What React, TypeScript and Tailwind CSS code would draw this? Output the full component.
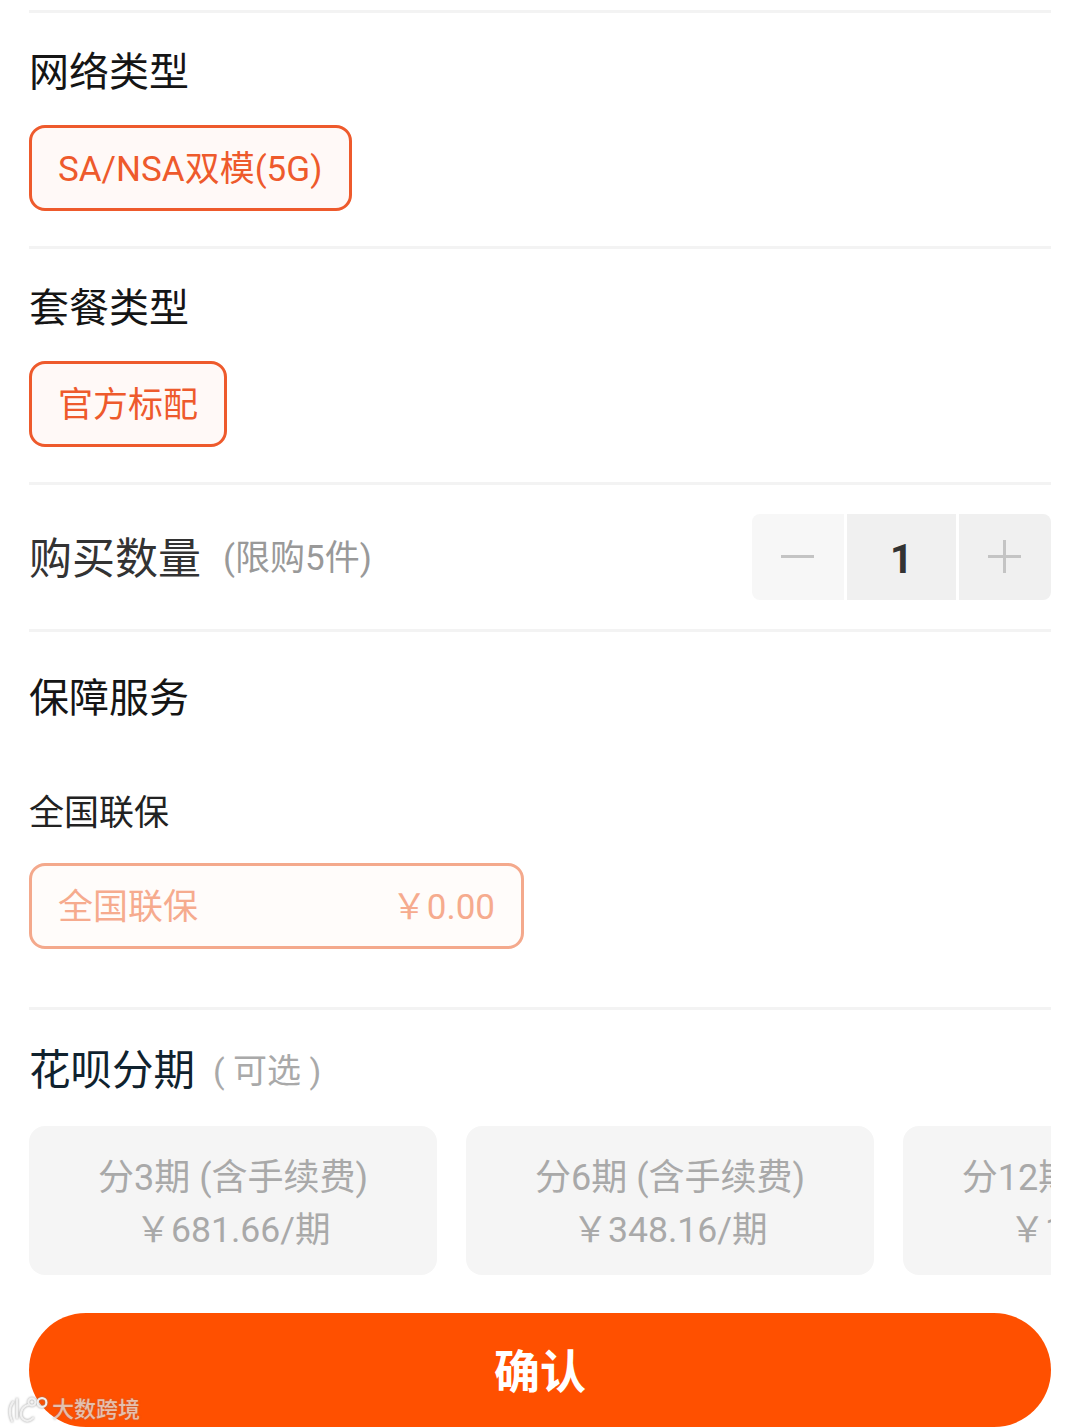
const FONT = "font-['Roboto','Noto_Sans_CJK_SC',sans-serif]";

function Title({ children }: { children: React.ReactNode }) {
  return <div className="h-[56px] pt-[2px] text-[40px] leading-[56px] text-[#151515]">{children}</div>;
}

function Chip({ children, muted, width }: { children: React.ReactNode; muted?: boolean; width?: string }) {
  return (
    <div
      className={
        muted
          ? "flex h-[86px] w-[495px] items-center justify-between rounded-[16px] border-[3px] border-[#f4a98c] bg-[#fffcfa] px-[26px] pt-[4px] text-[35px] text-[#f6ab8e]"
          : `flex h-[86px] items-center rounded-[16px] border-[3px] border-[#ee5a2c] bg-[#fff9f7] pl-[26px] pt-[4px] text-[35px] text-[#ee5a2c] ${width}`
      }
    >
      {children}
    </div>
  );
}

function Installment({ top, bottom }: { top: string; bottom: string }) {
  return (
    <div className="flex h-[149px] w-[408px] shrink-0 flex-col items-center justify-center rounded-[16px] bg-[#f5f5f5] pt-[6px] text-[36px] leading-[52px] text-[#a9a9a9]">
      <div className="whitespace-nowrap">{top}</div>
      <div className="whitespace-nowrap text-[35.6px]">{bottom}</div>
    </div>
  );
}

export default function App() {
  return (
    <div className={`relative h-[1427px] w-[1079px] overflow-hidden bg-white pl-[29px] pr-[28px] pt-[10px] ${FONT}`}>
      <div className="border-t-[3px] border-[#f3f3f3] pb-[35px] pt-[30px]">
        <Title>网络类型</Title>
        <div className="mt-[26px]">
          <Chip width="w-[323px]">SA/NSA双模(5G)</Chip>
        </div>
      </div>

      <div className="border-t-[3px] border-[#f3f3f3] pb-[35px] pt-[30px]">
        <Title>套餐类型</Title>
        <div className="mt-[26px]">
          <Chip width="w-[198px]">官方标配</Chip>
        </div>
      </div>

      <div className="flex h-[147px] items-center justify-between border-t-[3px] border-[#f3f3f3]">
        <div className="flex items-center pt-[5px]">
          <span className="text-[43px] text-[#333333]">购买数量</span>
          <span className="ml-[22px] text-[35px] text-[#999999]">(限购5件)</span>
        </div>
        <div className="flex h-[86px] gap-[3px]">
          <div className="flex w-[92px] items-center justify-center rounded-l-[8px] bg-[#f7f7f7] pb-[2px] pr-[2px]">
            <div className="h-[3px] w-[33px] bg-[#c4c4c4]" />
          </div>
          <div className="flex w-[109px] items-center justify-center bg-[#f0f0f0] pt-[5px] text-[40px] font-bold text-[#333333]">1</div>
          <div className="flex w-[92px] items-center justify-center rounded-r-[8px] bg-[#f0f0f0] pb-[2px] pr-[2px]">
            <svg width="33" height="33" viewBox="0 0 33 33" fill="none" stroke="#c4c4c4" strokeWidth="3">
              <path d="M0 16.5H33M16.5 0V33" />
            </svg>
          </div>
        </div>
      </div>

      <div className="border-t-[3px] border-[#f3f3f3] pb-[58px] pt-[37px]">
        <Title>保障服务</Title>
        <div className="mb-[28px] mt-[62px] h-[48px] pt-[3px] text-[35px] leading-[48px] text-[#222222]">全国联保</div>
        <Chip muted>
          <span>全国联保</span>
          <span>￥0.00</span>
        </Chip>
      </div>

      <div className="border-t-[3px] border-[#f3f3f3] pt-[32px]">
        <div className="flex h-[56px] items-center pt-[3px]">
          <span className="text-[41.5px] text-[#10222e]">花呗分期</span>
          <span className="ml-[18px] text-[34px] text-[#a9a9a9]">( 可选 )</span>
        </div>
        <div className="mt-[28px] flex gap-[29px] overflow-hidden">
          <Installment top="分3期 (含手续费)" bottom="￥681.66/期" />
          <Installment top="分6期 (含手续费)" bottom="￥348.16/期" />
          <Installment top="分12期 (含手续费)" bottom="￥174.08/期" />
        </div>
      </div>

      <div className="mt-[38px] flex h-[114px] items-center justify-center rounded-full bg-[#ff5000] pt-[5px] text-[46px] font-bold text-white">
        确认
      </div>

      {/* watermark */}
      <div className="absolute bottom-[3px] left-[8px] flex items-center gap-[4px] text-white/60">
        <svg className="drop-shadow-[0_0_1px_rgba(130,130,130,0.8)]" width="40" height="28" viewBox="0 0 40 28" fill="none" stroke="#f0f0f0" strokeWidth="2.2" strokeLinecap="round">
          <path d="M5 6C1 11 1 19 4 25M9 3V22" />
          <path d="M20 9C13 11 11 19 15 23C18 26 22 25 25 22" />
          <circle cx="24" cy="6" r="3.6" />
          <circle cx="34" cy="6.5" r="4.4" />
        </svg>
        <span className="text-[22px] font-medium leading-[24px] [text-shadow:0_0_2px_rgba(120,120,120,0.6)]">大数跨境</span>
      </div>
    </div>
  );
}
